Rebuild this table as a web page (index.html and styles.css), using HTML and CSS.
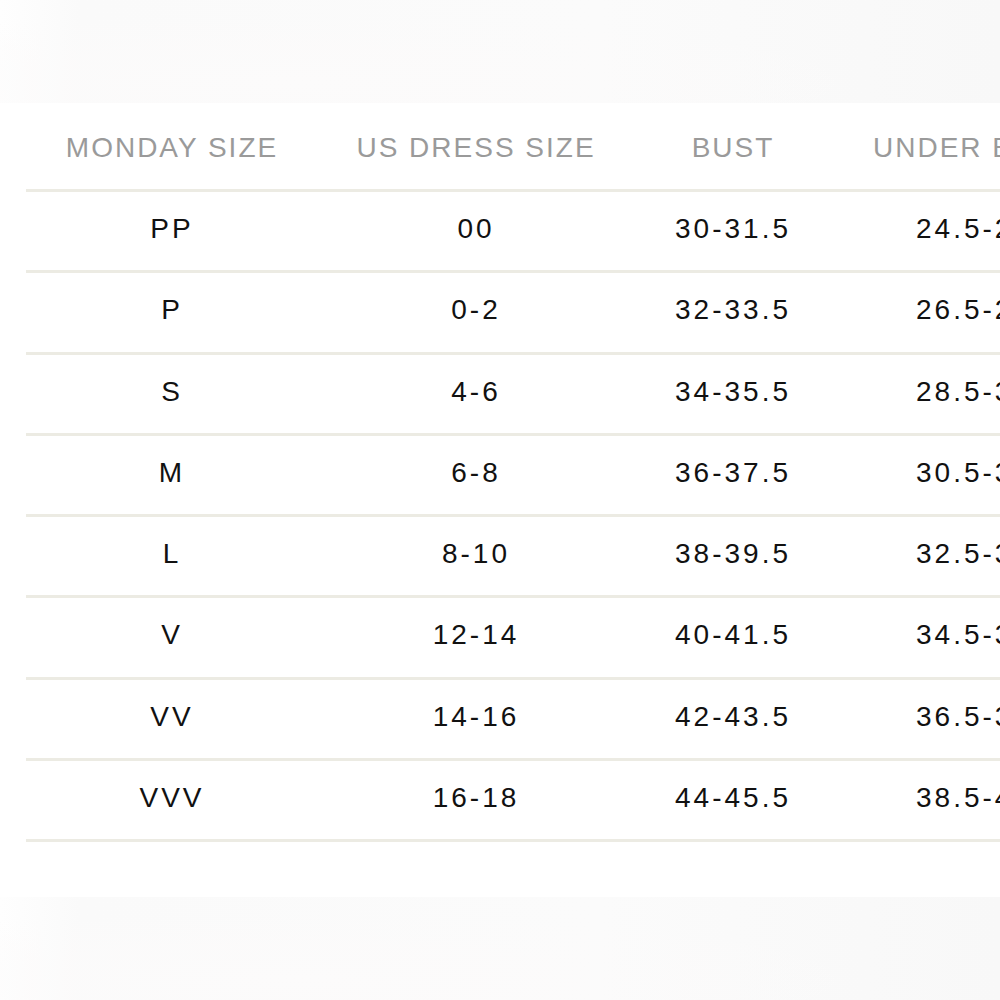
FILE: index.html
```html
<!DOCTYPE html>
<html lang="en">
<head>
<meta charset="utf-8">
<title>Size Chart</title>
<link rel="stylesheet" href="styles.css">
</head>
<body>
<div class="page">
  <div class="backdrop top"></div>
  <section class="card">
    <div class="sizes">
      <div class="row head">
        <div class="cell">MONDAY SIZE</div>
        <div class="cell">US DRESS SIZE</div>
        <div class="cell">BUST</div>
        <div class="cell">UNDER BUST</div>
      </div>
      <div class="row"><div class="cell">PP</div><div class="cell">00</div><div class="cell">30-31.5</div><div class="cell">24.5-26</div></div>
      <div class="row"><div class="cell">P</div><div class="cell">0-2</div><div class="cell">32-33.5</div><div class="cell">26.5-28</div></div>
      <div class="row"><div class="cell">S</div><div class="cell">4-6</div><div class="cell">34-35.5</div><div class="cell">28.5-30</div></div>
      <div class="row"><div class="cell">M</div><div class="cell">6-8</div><div class="cell">36-37.5</div><div class="cell">30.5-32</div></div>
      <div class="row"><div class="cell">L</div><div class="cell">8-10</div><div class="cell">38-39.5</div><div class="cell">32.5-34</div></div>
      <div class="row"><div class="cell">V</div><div class="cell">12-14</div><div class="cell">40-41.5</div><div class="cell">34.5-36</div></div>
      <div class="row"><div class="cell">VV</div><div class="cell">14-16</div><div class="cell">42-43.5</div><div class="cell">36.5-38</div></div>
      <div class="row"><div class="cell">VVV</div><div class="cell">16-18</div><div class="cell">44-45.5</div><div class="cell">38.5-40</div></div>
    </div>
  </section>
  <div class="backdrop bottom"></div>
</div>
</body>
</html>
```

FILE: styles.css
```css
html, body {
  margin: 0;
  padding: 0;
  overflow: hidden;
  background: #ffffff;
}

.page {
  width: 1000px;
  height: 1000px;
  display: flex;
  flex-direction: column;
  font-family: "Liberation Sans", Arial, sans-serif;
}

.backdrop {
  flex: none;
  background:
    radial-gradient(ellipse at 30% 80%, #fcfbfb 0%, rgba(252,251,251,0) 60%),
    linear-gradient(90deg, #fefefe 0%, #fafafa 8%, #fbfbfb 60%, #f8f8f8 100%);
}

.backdrop.top {
  height: 103px;
}

.backdrop.bottom {
  flex: 1;
}

.card {
  flex: none;
  height: 794px;
  background: #ffffff;
  padding-left: 26px;
}

.sizes {
  display: flex;
  flex-direction: column;
  width: 1200px;
}

.row {
  display: grid;
  grid-template-columns: 292px 316px 198px 284px;
  align-items: center;
  box-sizing: border-box;
  height: 81.25px;
  padding-bottom: 4px;
  border-bottom: 3px solid #ecebe3;
  color: #111111;
  font-size: 28px;
  line-height: 32px;
  letter-spacing: 3px;
}

.row.head {
  height: 89px;
  padding-top: 3px;
  padding-bottom: 0;
  color: #9a9a9a;
  letter-spacing: 2px;
}

.cell {
  text-align: center;
  white-space: nowrap;
}
```
